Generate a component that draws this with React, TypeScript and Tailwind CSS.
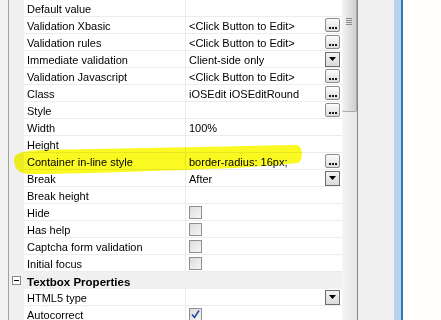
import React from 'react';

type Kind = 'none' | 'dots' | 'drop' | 'check' | 'checked';

interface Row {
  label: string;
  value?: string;
  kind?: Kind;
  category?: boolean;
}

const rows: Row[] = [
  { label: 'Default value' },
  { label: 'Validation Xbasic', value: '<Click Button to Edit>', kind: 'dots' },
  { label: 'Validation rules', value: '<Click Button to Edit>', kind: 'dots' },
  { label: 'Immediate validation', value: 'Client-side only', kind: 'drop' },
  { label: 'Validation Javascript', value: '<Click Button to Edit>', kind: 'dots' },
  { label: 'Class', value: 'iOSEdit iOSEditRound', kind: 'dots' },
  { label: 'Style', kind: 'dots' },
  { label: 'Width', value: '100%' },
  { label: 'Height' },
  { label: 'Container in-line style', value: 'border-radius: 16px;', kind: 'dots' },
  { label: 'Break', value: 'After', kind: 'drop' },
  { label: 'Break height' },
  { label: 'Hide', kind: 'check' },
  { label: 'Has help', kind: 'check' },
  { label: 'Captcha form validation', kind: 'check' },
  { label: 'Initial focus', kind: 'check' },
  { label: 'Textbox Properties', category: true },
  { label: 'HTML5 type', kind: 'drop' },
  { label: 'Autocorrect', kind: 'checked' },
];

const DotsButton = () => (
  <div className="ml-auto mr-[2px] flex h-[14px] w-[15px] items-end justify-center gap-[1px] rounded-[2px] border border-[#8c8c8c] bg-gradient-to-b from-[#fdfdfd] to-[#dcdcdc] pb-[2px]">
    <span className="h-[2px] w-[2px] bg-[#1a1a1a]" />
    <span className="h-[2px] w-[2px] bg-[#1a1a1a]" />
    <span className="h-[2px] w-[2px] bg-[#1a1a1a]" />
  </div>
);

const DropButton = () => (
  <div className="ml-auto mr-[2px] flex h-[15px] w-[15px] items-center justify-center border border-[#6d6d6d] bg-gradient-to-b from-[#f4f4f4] to-[#dadada]">
    <svg width="7" height="4" viewBox="0 0 7 4">
      <path d="M0 0h7L3.5 4z" fill="#000" />
    </svg>
  </div>
);

const CheckBox = ({ checked }: { checked?: boolean }) => (
  <div className="flex h-[13px] w-[13px] items-center justify-center border border-[#8e8f8f] bg-gradient-to-br from-[#dcdcdc] to-[#f6f6f6]">
    {checked && (
      <svg width="9" height="9" viewBox="0 0 9 9">
        <path d="M1 4.5l2.5 3L8 0.5" fill="none" stroke="#2b4a9e" strokeWidth="1.6" />
      </svg>
    )}
  </div>
);

const PropRow = ({ row }: { row: Row }) => {
  if (row.category) {
    return (
      <div className="flex h-[17px] items-center bg-[#f0f0f0]">
        <div className="flex w-[15px] justify-center">
          <div className="flex h-[9px] w-[9px] items-center justify-center border border-[#8a8a8a] bg-white">
            <span className="h-px w-[5px] bg-black" />
          </div>
        </div>
        <span className="pl-[3px] pt-[2px] text-[11.5px] font-bold leading-[16px] text-black">{row.label}</span>
      </div>
    );
  }
  return (
    <div className="flex h-[17px]">
      <div className="w-[15px] bg-[#f0f0f0]" />
      <div className="flex w-[161px] items-center border-b border-[#ececec] bg-white pl-[3px] leading-[16px]">
        <span className="pt-[2px]">{row.label}</span>
      </div>
      <div className="w-px bg-[#ececec]" />
      <div className="flex w-[156px] items-center border-b border-[#ececec] bg-white pl-[3px] leading-[16px]">
        {row.value && <span className="whitespace-nowrap pt-[2px]">{row.value}</span>}
        {row.kind === 'dots' && <DotsButton />}
        {row.kind === 'drop' && <DropButton />}
        {row.kind === 'check' && <CheckBox />}
        {row.kind === 'checked' && <CheckBox checked />}
      </div>
    </div>
  );
};

export default function App() {
  return (
    <div
      className="relative flex h-[320px] w-[441px] overflow-hidden bg-white text-[11px] text-black"
      style={{ fontFamily: '"Liberation Sans", Arial, sans-serif' }}
    >
      {/* left frame */}
      <div className="w-[8px] bg-[#f2f2f2]" />
      <div className="w-px bg-[#a0a0a0]" />

      {/* property grid */}
      <div className="flex w-[333px] flex-col">
        <div className="flex h-px">
          <div className="w-[15px] bg-[#f0f0f0]" />
          <div className="flex-1 bg-white" />
        </div>
        {rows.map((r) => (
          <PropRow key={r.label} row={r} />
        ))}
      </div>

      {/* scrollbar */}
      <div className="flex w-[15px] flex-col bg-[#ebebeb]">
        <div className="relative h-[112px] rounded-b-[2px] border-r border-b border-[#a9a9a9] bg-gradient-to-r from-[#f4f4f4] via-[#e2e2e2] to-[#cfcfcf]">
          <div className="absolute left-[4px] top-[18px] flex flex-col gap-[1px]">
            <span className="h-px w-[6px] bg-[#8a8a8a]" />
            <span className="h-px w-[6px] bg-[#8a8a8a]" />
            <span className="h-px w-[6px] bg-[#8a8a8a]" />
            <span className="h-px w-[6px] bg-[#8a8a8a]" />
          </div>
        </div>
        <div className="flex-1 border-l border-[#f6f6f6] bg-gradient-to-r from-[#f3f3f3] to-[#e6e6e6]" />
      </div>
      <div className="w-px bg-[#858585]" />

      {/* side panel */}
      <div className="w-[36px] bg-[#f0f0f0]" />
      <div className="w-[7px] bg-[#b9d2ec]" />
      <div className="w-[2px] bg-[#2a7ab8]" />
      <div className="flex-1 bg-[#fffefa]" />

      {/* marker highlight */}
      <svg
        className="pointer-events-none absolute left-0 top-0 mix-blend-multiply"
        width="441"
        height="320"
        viewBox="0 0 441 320"
      >
        <path
          d="M14 161C13 153 22 151 40 150L200 147C250 146 285 145 297 145C303 147 304 159 298 163C270 166 230 169 150 171C100 173 60 174 30 174C19 174 15 169 14 161Z"
          fill="#fafa22"
        />
      </svg>
    </div>
  );
}
